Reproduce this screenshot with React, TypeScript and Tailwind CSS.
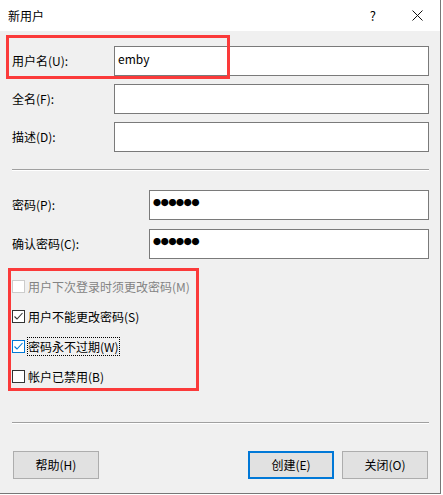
import React from "react";

type FieldProps = {
  label: string;
  labelWidth: string;
  children?: React.ReactNode;
};

function Field({ label, labelWidth, children }: FieldProps) {
  return (
    <div className="flex h-[30px] items-center">
      <label className={`${labelWidth} shrink-0 leading-[16px]`}>{label}</label>
      <div className="flex h-[30px] flex-1 items-center border border-[#7a7a7a] bg-white pb-[4px] pl-[3px]">
        {children}
      </div>
    </div>
  );
}

function Password() {
  return (
    <span className="font-['Noto_Sans_CJK_SC',sans-serif] text-[8px] leading-none tracking-[-0.3px]">
      ●●●●●●
    </span>
  );
}

type CheckProps = {
  label: string;
  checked?: boolean;
  disabled?: boolean;
  focused?: boolean;
};

function CheckRow({ label, checked, disabled, focused }: CheckProps) {
  const color = disabled ? "#cccccc" : focused ? "#0078d7" : "#333333";
  return (
    <div className="flex h-[30px] items-center">
      <svg width="13" height="13" viewBox="0 0 13 13" className="shrink-0">
        <rect x="0.5" y="0.5" width="12" height="12" fill="white" stroke={color} />
        {checked && (
          <polyline
            points="2.5,6.5 5,9 10.5,3"
            fill="none"
            stroke={color}
            strokeWidth="1.1"
          />
        )}
      </svg>
      <span
        className={`ml-[2px] border px-0 leading-[17px] ${
          focused ? "border-dotted border-black" : "border-transparent"
        } ${disabled ? "text-[#838383]" : "text-black"}`}
      >
        {label}
      </span>
    </div>
  );
}

function Btn({ label, primary }: { label: string; primary?: boolean }) {
  return (
    <button
      className={`flex h-[28px] w-[86px] items-center justify-center bg-[#e1e1e1] leading-none ${
        primary ? "border-2 border-[#0078d7]" : "border border-[#adadad]"
      }`}
    >
      {label}
    </button>
  );
}

function Separator() {
  return <div className="h-[2px] border-t border-b border-t-[#a0a0a0] border-b-white" />;
}

export default function App() {
  return (
    <div className="h-[495px] w-[443px] bg-white font-['Noto_Sans_CJK_SC',sans-serif] text-[12px] text-black">
      <div className="relative flex h-[494px] w-[441px] flex-col border-r border-b border-[#777777] bg-[#f0f0f0]">
        {/* title bar */}
        <div className="flex h-[31px] items-center bg-white pl-[8px]">
          <span className="leading-none">新用户</span>
          <span className="ml-auto text-[13px] leading-none">?</span>
          <svg width="11" height="11" viewBox="0 0 11 11" className="mr-[17px] ml-[36px]">
            <path d="M0.5 0.5 L10.5 10.5 M10.5 0.5 L0.5 10.5" stroke="#111" strokeWidth="1" />
          </svg>
        </div>

        <div className="flex flex-col pr-[11px] pl-[12px]">
          <div className="mt-[15px] flex flex-col gap-[8px]">
            <Field label="用户名(U):" labelWidth="w-[102px]">
              <span className="leading-none">emby</span>
            </Field>
            <Field label="全名(F):" labelWidth="w-[102px]" />
            <Field label="描述(D):" labelWidth="w-[102px]" />
          </div>

          <div className="mt-[17px]">
            <Separator />
          </div>

          <div className="mt-[19px] flex flex-col gap-[9px]">
            <Field label="密码(P):" labelWidth="w-[137px]">
              <Password />
            </Field>
            <Field label="确认密码(C):" labelWidth="w-[137px]">
              <Password />
            </Field>
          </div>

          <div className="mt-[12px] flex flex-col">
            <CheckRow label="用户下次登录时须更改密码(M)" disabled />
            <CheckRow label="用户不能更改密码(S)" checked />
            <CheckRow label="密码永不过期(W)" checked focused />
            <CheckRow label="帐户已禁用(B)" />
          </div>

          <div className="mt-[31px]">
            <Separator />
          </div>

          <div className="mt-[27px] flex items-center pr-px pl-px">
            <Btn label="帮助(H)" />
            <div className="ml-auto flex gap-[8px]">
              <Btn label="创建(E)" primary />
              <Btn label="关闭(O)" />
            </div>
          </div>
        </div>

        {/* annotation boxes */}
        <div className="pointer-events-none absolute top-[35px] left-[6px] h-[44px] w-[224px] border-[3px] border-[#fb3a3a]" />
        <div className="pointer-events-none absolute top-[268px] left-[8px] h-[123px] w-[191px] border-[3px] border-[#fb3a3a]" />
      </div>
    </div>
  );
}
